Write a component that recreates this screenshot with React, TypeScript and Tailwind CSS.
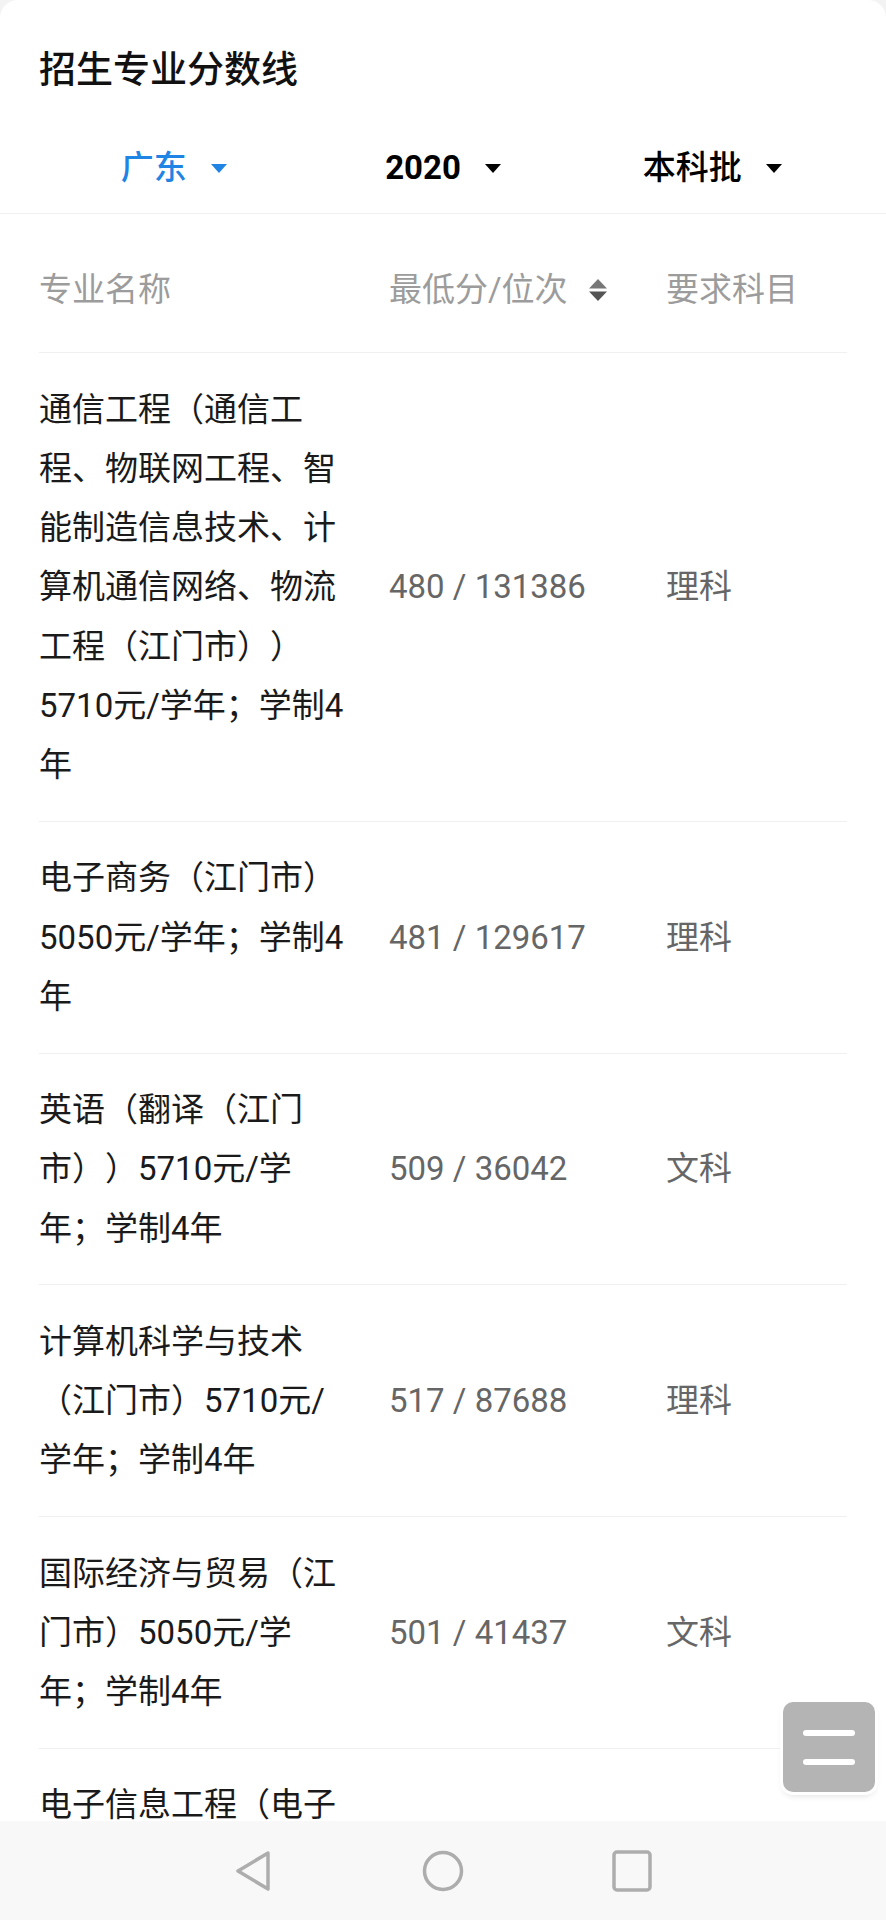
import React from 'react';

// 招生专业分数线 page

interface MajorRow {
  name: string;
  score: string;
  subject: string;
}

const rows: MajorRow[] = [
  {
    name: '通信工程（通信工程、物联网工程、智能制造信息技术、计算机通信网络、物流工程（江门市））5710元/学年；学制4年',
    score: '480 / 131386',
    subject: '理科',
  },
  { name: '电子商务（江门市）5050元/学年；学制4年', score: '481 / 129617', subject: '理科' },
  { name: '英语（翻译（江门市））5710元/学年；学制4年', score: '509 / 36042', subject: '文科' },
  { name: '计算机科学与技术（江门市）5710元/学年；学制4年', score: '517 / 87688', subject: '理科' },
  { name: '国际经济与贸易（江门市）5050元/学年；学制4年', score: '501 / 41437', subject: '文科' },
  {
    name: '电子信息工程（电子科学与技术（江门市））5710元/学年；学制4年',
    score: '486 / 120785',
    subject: '理科',
  },
];

const Caret = ({ color }: { color: string }) => (
  <svg width="16" height="9" viewBox="0 0 16 9">
    <path d="M0 0 L16 0 L8 9 Z" fill={color} />
  </svg>
);

const SortIcon = () => (
  <svg width="20" height="22" viewBox="0 0 20 22">
    <path d="M10 0 L19 9.5 L1 9.5 Z" fill="#777" />
    <path d="M1 12.5 L19 12.5 L10 22 Z" fill="#555" />
  </svg>
);

const Filter = ({ label, color, bold }: { label: string; color: string; bold?: boolean }) => (
  <div className="flex items-center justify-center gap-[24px]">
    <span className={bold ? 'font-bold' : 'font-medium'} style={{ color }}>
      {label}
    </span>
    <Caret color={color} />
  </div>
);

export default function App() {
  return (
    <div
      className="relative flex flex-col h-[1920px] w-full overflow-hidden bg-[#f3f3f3] [text-spacing-trim:space-all]"
      style={{ fontFamily: 'Roboto, "Noto Sans CJK SC", sans-serif' }}
    >
      <div className="flex-1 overflow-hidden rounded-t-[18px] bg-white">
        {/* Title */}
        <h1 className="px-[39px] pt-[49px] text-[37px] leading-[44px] font-medium text-[#111]">
          招生专业分数线
        </h1>

        {/* Filters */}
        <div className="mt-[30px] grid h-[91px] grid-cols-3 items-center border-b border-[#efefef] px-[39px] text-[33px]">
          <Filter label="广东" color="#1f84e4" />
          <Filter label="2020" color="#000" bold />
          <Filter label="本科批" color="#000" />
        </div>

        {/* Table */}
        <div className="px-[39px]">
          <div className="flex h-[139px] items-start border-b border-[#f0f0f0] pt-[47px] text-[33px] leading-[58px] text-[#9c9c9c]">
            <div className="w-[350px]">专业名称</div>
            <div className="flex h-[58px] w-[277px] items-center gap-[20px]">
              <span>最低分/位次</span>
              <SortIcon />
            </div>
            <div className="flex-1">要求科目</div>
          </div>

          {rows.map((row) => (
            <div
              key={row.name}
              className="flex items-center border-b border-[#f0f0f0] py-[26.5px] text-[33px] leading-[59.25px]"
            >
              <div className="w-[350px] pr-[38px] text-[#1a1a1a]">{row.name}</div>
              <div className="w-[277px] text-[#666]">{row.score}</div>
              <div className="flex-1 text-[#666]">{row.subject}</div>
            </div>
          ))}
        </div>
      </div>

      {/* Floating menu button */}
      <div className="absolute left-[783px] top-[1702px] flex h-[90px] w-[92px] flex-col items-center justify-center gap-[23px] rounded-[10px] bg-[#b4b4b4] ring-[3px] ring-white shadow-[0_4px_6px_rgba(0,0,0,0.12)]">
        <div className="h-[6px] w-[52px] rounded-full bg-white" />
        <div className="h-[6px] w-[52px] rounded-full bg-white" />
      </div>

      {/* System navigation bar */}
      <div className="flex h-[99px] items-center bg-[#f8f8f8]">
        <div className="flex w-full items-center">
          <div className="ml-[234px]">
            <svg width="38" height="42" viewBox="0 0 38 42">
              <path d="M34 3 L4 21 L34 39 Z" fill="none" stroke="#adadad" strokeWidth="3.5" strokeLinejoin="round" />
            </svg>
          </div>
          <div className="ml-[150px]">
            <svg width="42" height="42" viewBox="0 0 42 42">
              <circle cx="21" cy="21" r="18.5" fill="none" stroke="#adadad" strokeWidth="3.5" />
            </svg>
          </div>
          <div className="ml-[148px]">
            <svg width="40" height="42" viewBox="0 0 40 42">
              <rect x="2" y="2" width="36" height="38" rx="3" fill="none" stroke="#adadad" strokeWidth="3.5" />
            </svg>
          </div>
        </div>
      </div>
    </div>
  );
}
